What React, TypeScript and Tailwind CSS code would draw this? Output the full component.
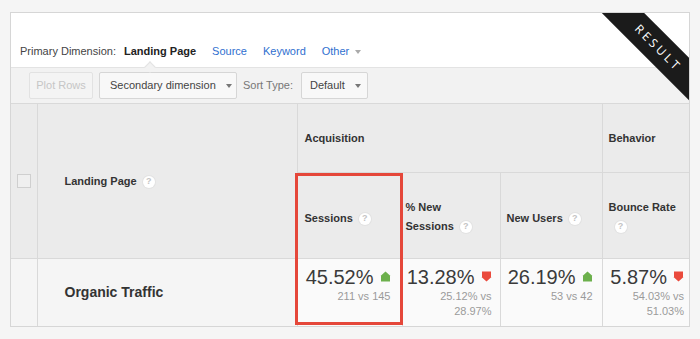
import React from 'react';

const Help = () => (
  <span className="inline-flex items-center justify-center w-[12px] h-[12px] rounded-full bg-white text-[#c4c4c4] text-[9px] font-bold leading-none align-middle ml-[6px] shadow-[0_0_0_1px_#e2e2e2]">
    ?
  </span>
);

const Arrow = ({ up }: { up: boolean }) => (
  <svg width="11" height="11" viewBox="0 0 11 11" className="ml-[6px] mb-[2px]">
    {up ? (
      <polygon points="5.5,0.5 10.5,5 10,5 10,10.5 1,10.5 1,5 0.5,5" fill="#6cb04c" />
    ) : (
      <polygon points="5.5,10.5 10.5,6 10,6 10,0.5 1,0.5 1,6 0.5,6" fill="#ea4a3c" />
    )}
  </svg>
);

const Caret = () => (
  <span className="inline-block w-0 h-0 border-l-[3px] border-r-[3px] border-t-[4px] border-l-transparent border-r-transparent border-t-[#777] ml-[10px] align-middle" />
);

interface Metric {
  value: string;
  up: boolean;
  sub: React.ReactNode;
  pr: string;
}

const metrics: Metric[] = [
  { value: '45.52%', up: true, sub: '211 vs 145', pr: 'pr-[11px]' },
  { value: '13.28%', up: false, sub: <>25.12% vs<br />28.97%</>, pr: 'pr-[8px]' },
  { value: '26.19%', up: true, sub: '53 vs 42', pr: 'pr-[9px]' },
  { value: '5.87%', up: false, sub: <>54.03% vs<br />51.03%</>, pr: 'pr-[5px]' },
];

export default function App() {
  return (
    <div className="w-[700px] h-[339px] bg-[#f5f5f5] pt-[12px] pl-[10px] font-['Liberation_Sans',Arial,sans-serif]">
      <div className="relative w-[680px] h-[315px] bg-white border border-[#d6d6d6] overflow-hidden">
        {/* primary dimension */}
        <div className="h-[54px] flex items-end pb-[9px] pl-[9px] text-[11px] leading-[13px]">
          <span className="text-[#444]">Primary Dimension:</span>
          <span className="ml-[8px] font-bold text-[#222]">Landing Page</span>
          <span className="ml-[16px] text-[#2f6fcf]">Source</span>
          <span className="ml-[16px] text-[#2f6fcf]">Keyword</span>
          <span className="ml-[16px] text-[#2f6fcf]">Other</span>
          <span className="inline-block w-0 h-0 border-l-[3px] border-r-[3px] border-t-[4px] border-l-transparent border-r-transparent border-t-[#aaa] ml-[6px] mb-[4px]" />
        </div>

        {/* toolbar */}
        <div className="relative h-[36px] bg-[#f2f2f2] border-t border-[#e3e3e3] flex items-center pl-[18px] text-[11px]">
          <div className="absolute left-[135px] top-[-5px] w-[8px] h-[8px] rotate-45 bg-[#f2f2f2] border-l border-t border-[#e3e3e3]" />
          <div className="h-[27px] w-[64px] flex items-center justify-center rounded-[2px] border border-[#e2e2e2] bg-[#f4f4f4] text-[#c6c6c6]">
            Plot Rows
          </div>
          <div className="ml-[6px] h-[27px] w-[138px] flex items-center pl-[10px] rounded-[2px] border border-[#d6d6d6] bg-[#f8f8f8] text-[#444]">
            Secondary dimension
            <Caret />
          </div>
          <span className="ml-[6px] text-[#777]">Sort Type:</span>
          <div className="ml-[8px] h-[27px] w-[67px] flex items-center pl-[8px] rounded-[2px] border border-[#d6d6d6] bg-[#f8f8f8] text-[#444]">
            Default
            <Caret />
          </div>
        </div>

        {/* table */}
        <table className="w-[678px] table-fixed border-collapse text-[#333]">
          <colgroup>
            <col className="w-[26px]" />
            <col className="w-[260px]" />
            <col className="w-[105px]" />
            <col className="w-[98px]" />
            <col className="w-[102px]" />
            <col />
          </colgroup>
          <tbody>
            <tr className="h-[69px] bg-[#ebebeb] text-[11px] font-bold">
              <td rowSpan={2} className="border-t border-r border-[#d9d9d9] align-middle">
                <div className="mx-auto w-[14px] h-[14px] border border-[#cfcfcf] bg-[#efefef]" />
              </td>
              <td rowSpan={2} className="border-t border-r border-[#d9d9d9] pl-[27px] align-middle">
                Landing Page
                <Help />
              </td>
              <td colSpan={3} className="border-t border-r border-b border-[#d9d9d9] pl-[7px]">
                Acquisition
              </td>
              <td className="border-t border-b border-[#d9d9d9] pl-[6px]">Behavior</td>
            </tr>
            <tr className="h-[86px] bg-[#ebebeb] text-[11px] font-bold leading-[19px]">
              <td className="border-r border-[#d9d9d9] pl-[7px] pt-[5px]">
                Sessions
                <Help />
              </td>
              <td className="border-r border-[#d9d9d9] pl-[3px] pt-[2px]">
                % New
                <br />
                Sessions
                <Help />
              </td>
              <td className="border-r border-[#d9d9d9] pl-[6px] pt-[5px]">
                New Users
                <Help />
              </td>
              <td className="pl-[6px] pt-[2px]">
                Bounce Rate
                <br />
                <Help />
              </td>
            </tr>
            <tr className="h-[68px]">
              <td className="border-t border-r border-[#d9d9d9] bg-[#f5f5f5]" />
              <td className="border-t border-r border-[#d9d9d9] bg-[#f5f5f5] pl-[27px] text-[14px] font-bold text-[#333]">
                Organic Traffic
              </td>
              {metrics.map((m, i) => (
                <td
                  key={i}
                  className={`border-t border-[#d9d9d9] bg-[#fafafa] align-top text-right pt-[6px] ${m.pr} ${i < 3 ? 'border-r' : ''}`}
                >
                  <div className="flex items-center justify-end text-[20px] leading-[24px] text-[#3a3a3a]">
                    {m.value}
                    <Arrow up={m.up} />
                  </div>
                  <div className="text-[11px] leading-[15px] text-[#9a9a9a]">{m.sub}</div>
                </td>
              ))}
            </tr>
          </tbody>
        </table>

        {/* highlight box */}
        <div className="absolute left-[284px] top-[160px] w-[108px] h-[152px] border-[3px] border-[#e5473a]" />

        {/* ribbon */}
        <div className="absolute top-0 right-0 w-[88px] h-[88px] overflow-hidden">
          <div className="absolute left-[-14px] top-[19px] w-[140px] h-[30px] rotate-45 bg-[#1b1b1b] flex items-center justify-center pl-[3px] text-white text-[12px] tracking-[3px] font-['Open_Sans',sans-serif]">
            RESULT
          </div>
        </div>
      </div>
    </div>
  );
}
